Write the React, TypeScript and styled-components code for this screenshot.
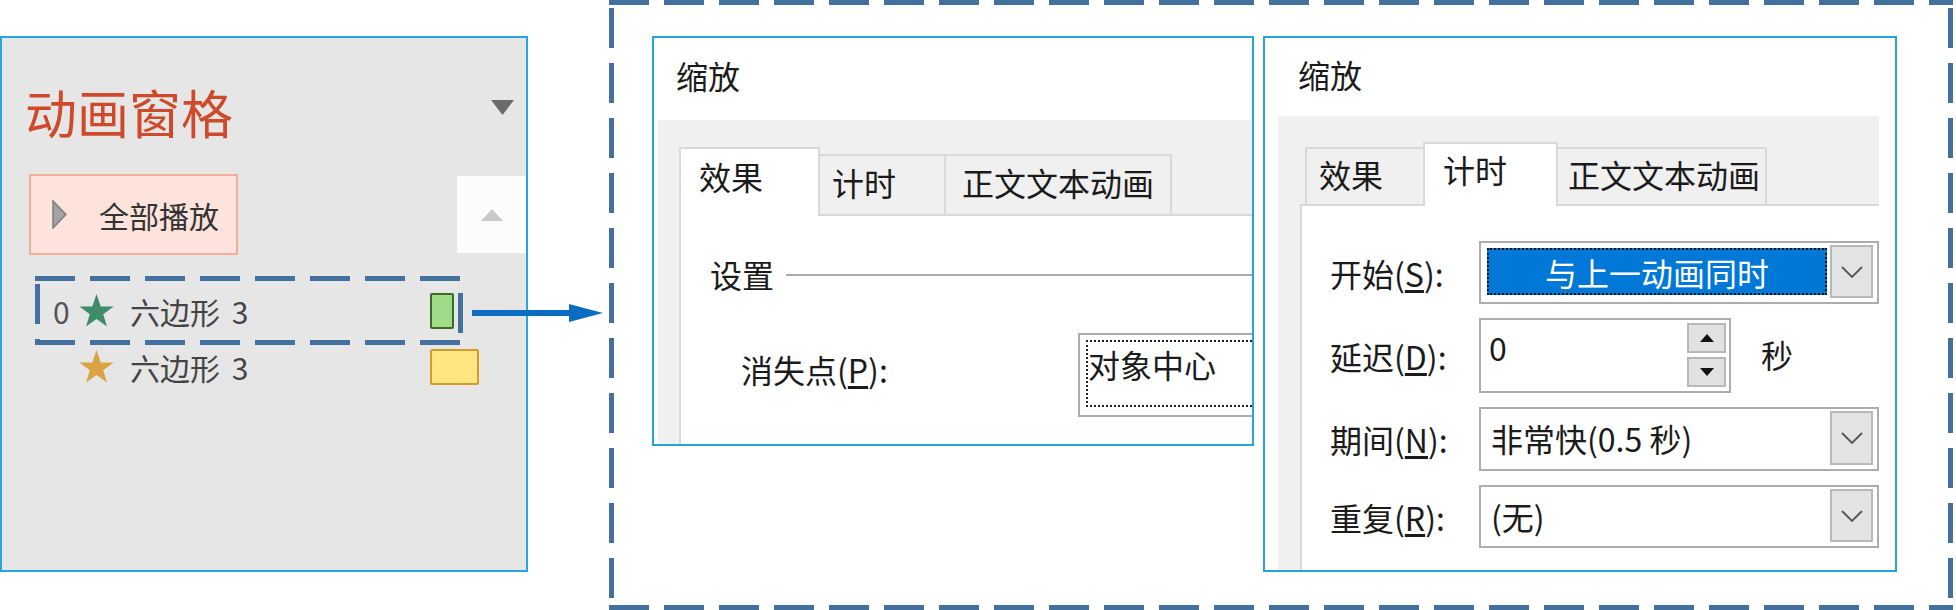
import React from 'react'
import styled, { createGlobalStyle } from 'styled-components'

const GlobalStyle = createGlobalStyle`
  html, body {
    margin: 0;
    padding: 0;
    background: #fff;
  }
  body {
    font-family: "Noto Sans CJK SC", "Noto Sans", sans-serif;
    color: #1b1b1b;
  }
  * { box-sizing: border-box; }
`

const DASH = '#43709d'

// dashed annotation frame, drawn with gradients so dash/gap match the picture (40 / 15)
const dashes = (t: number, left: number, right: number) => `
  background:
    repeating-linear-gradient(90deg, ${DASH} 0 40px, transparent 40px 55px) left top / 100% ${t}px no-repeat,
    repeating-linear-gradient(90deg, ${DASH} 0 40px, transparent 40px 55px) left bottom / 100% ${t}px no-repeat,
    repeating-linear-gradient(180deg, transparent 0 ${left}px, ${DASH} ${left}px ${left + 40}px, transparent ${left + 40}px 55px) left top / ${t}px 100% no-repeat,
    repeating-linear-gradient(180deg, transparent 0 ${right}px, ${DASH} ${right}px ${right + 40}px, transparent ${right + 40}px 55px) right top / ${t}px 100% no-repeat;
`

const Page = styled.div`
  position: relative;
  width: 1956px;
  height: 610px;
  display: flex;
  align-items: flex-start;
  overflow: hidden;
`

/* ---------- animation pane ---------- */

const AnimPane = styled.div`
  width: 528px;
  height: 536px;
  margin-top: 36px;
  border: 2px solid #25a6de;
  background: #e6e6e6;
  display: flex;
  flex-direction: column;
  flex-shrink: 0;
`

const PaneHeader = styled.div`
  display: flex;
  justify-content: space-between;
  align-items: flex-start;
  padding: 44px 12px 0 23px;
`

const PaneTitle = styled.div`
  font-size: 52px;
  line-height: 60px;
  color: #cf4a2b;
`

const HeaderCaret = styled.svg`
  margin-top: 18px;
`

const PlayRow = styled.div`
  display: flex;
  justify-content: space-between;
  align-items: flex-start;
  margin-top: 32px;
`

const PlayButton = styled.div`
  margin-left: 27px;
  width: 209px;
  height: 81px;
  border: 2px solid #f3ae98;
  background: #fde3db;
  display: flex;
  align-items: center;
  padding-left: 21px;
  gap: 32px;
`

const PlayLabel = styled.span`
  font-size: 30px;
  line-height: 40px;
  color: #333;
`

const ScrollUp = styled.div`
  width: 69px;
  height: 77px;
  margin-top: 2px;
  background: #fcfcfc;
  display: flex;
  align-items: center;
  justify-content: center;
`

const TrackList = styled.div`
  margin-top: 28px;
`

const TrackRow = styled.div`
  position: relative;
  height: 56px;
  display: flex;
  align-items: center;
  padding: 0 47px 0 51px;
`

const TrackIndex = styled.span`
  width: 25px;
  font-size: 30px;
  line-height: 40px;
  color: #555;
`

const TrackName = styled.span`
  flex: 1;
  margin-left: 15px;
  font-size: 30px;
  line-height: 40px;
  word-spacing: 5px;
  color: #444;
`

const SwatchSlot = styled.div`
  width: 49px;
  display: flex;
`

const Swatch = styled.div<{ $w: number; $fill: string; $edge: string }>`
  width: ${p => p.$w}px;
  height: 36px;
  background: ${p => p.$fill};
  border: 2px solid ${p => p.$edge};
  border-radius: 2px;
`

const Highlight = styled.div`
  position: absolute;
  left: 33px;
  top: -7px;
  width: 428px;
  height: 69px;
  ${dashes(5, 8, 17)}
`

const Arrow = styled.svg`
  position: absolute;
  left: 472px;
  top: 303px;
`

/* ---------- dialogs ---------- */

const Frame = styled.div`
  margin-left: 81px;
  width: 1344px;
  height: 610px;
  padding: 36px 0 0 43px;
  display: flex;
  align-items: flex-start;
  gap: 9px;
  flex-shrink: 0;
  ${dashes(5, 8, 8)}
`

const Dialog = styled.div<{ $w: number; $h: number }>`
  width: ${p => p.$w}px;
  height: ${p => p.$h}px;
  border: 2px solid #27a3db;
  background: #fff;
  overflow: hidden;
  display: flex;
  flex-direction: column;
  flex-shrink: 0;
`

const DialogTitle = styled.div<{ $h: number; $pt: number; $pl: number }>`
  height: ${p => p.$h}px;
  flex-shrink: 0;
  padding: ${p => p.$pt}px 0 0 ${p => p.$pl}px;
  font-size: 32px;
  line-height: 40px;
`

const DialogBody = styled.div<{ $ml: number; $mr: number }>`
  flex: 1;
  min-width: 0;
  margin: 0 ${p => p.$mr}px 0 ${p => p.$ml}px;
  background: #f0f0f0;
  overflow: hidden;
  display: flex;
  flex-direction: column;
`

const TabStrip = styled.div<{ $mt: number; $pl: number }>`
  display: flex;
  align-items: flex-end;
  margin-top: ${p => p.$mt}px;
  padding-left: ${p => p.$pl}px;
  position: relative;
  z-index: 1;
`

const Tab = styled.div<{ $w: number; $h: number; $pt: number; $pl: number; $active?: boolean }>`
  position: relative;
  flex-shrink: 0;
  width: ${p => p.$w}px;
  height: ${p => p.$h}px;
  padding: ${p => p.$pt}px 0 0 ${p => p.$pl}px;
  border: 2px solid #d9d9d9;
  border-bottom: none;
  background: ${p => (p.$active ? '#fff' : '#f0f0f0')};
  margin-bottom: ${p => (p.$active ? -2 : 0)}px;
  z-index: ${p => (p.$active ? 2 : 1)};
  font-size: 32px;
  line-height: 40px;
  white-space: nowrap;
  & + & {
    margin-left: -2px;
  }
`

const TabPanel = styled.div<{ $ml: number }>`
  flex: 1;
  min-width: 0;
  margin-left: ${p => p.$ml}px;
  background: #fff;
  border-top: 2px solid #d9d9d9;
  border-left: 2px solid #d9d9d9;
`

const GroupHeader = styled.div`
  display: flex;
  align-items: center;
  padding: 38px 0 0 29px;
  font-size: 32px;
  line-height: 40px;
`

const GroupRule = styled.div`
  flex: 1;
  height: 2px;
  margin: 2px 0 0 12px;
  background: #a9a9a9;
`

const FieldRow = styled.div`
  display: flex;
  align-items: flex-start;
  margin-top: 39px;
  padding-left: 60px;
`

const FieldLabel = styled.div<{ $w: number; $pt?: number }>`
  width: ${p => p.$w}px;
  flex-shrink: 0;
  padding-top: ${p => p.$pt ?? 0}px;
  font-size: 32px;
  line-height: 40px;
  white-space: nowrap;
  u { text-underline-offset: 3px; }
`

const DropBox = styled.div`
  width: 320px;
  height: 84px;
  flex-shrink: 0;
  border: 2px solid #acacac;
  padding: 5px 0 8px 6px;
`

const FocusText = styled.div`
  height: 100%;
  border: 2px dotted #222;
  border-right: none;
  padding-top: 2px;
  font-size: 32px;
  line-height: 40px;
`

const TimingGrid = styled.div`
  display: flex;
  flex-direction: column;
  gap: 14px;
  padding: 35px 0 0 28px;
`

const TimingRow = styled.div`
  display: flex;
  align-items: center;
`

const Combo = styled.div<{ $h: number }>`
  width: 400px;
  height: ${p => p.$h}px;
  flex-shrink: 0;
  border: 2px solid #adadad;
  background: #fff;
  display: flex;
  align-items: stretch;
  padding: 2px 4px 4px 6px;
`

const ComboValue = styled.div`
  flex: 1;
  display: flex;
  align-items: center;
  padding-left: 4px;
  font-size: 32px;
  line-height: 40px;
  white-space: nowrap;
`

const Selection = styled.div`
  flex: 1;
  margin: 3px 3px 3px 0;
  background: #0078d7;
  outline: 2px dotted #111;
  outline-offset: -2px;
  color: #fff;
  display: flex;
  align-items: center;
  justify-content: center;
  font-size: 32px;
  line-height: 40px;
`

const ComboButton = styled.div`
  width: 43px;
  flex-shrink: 0;
  background: #e3e3e3;
  border: 2px solid #b8b8b8;
  display: flex;
  align-items: center;
  justify-content: center;
`

const Spin = styled.div`
  width: 252px;
  height: 75px;
  flex-shrink: 0;
  border: 2px solid #adadad;
  display: flex;
  justify-content: space-between;
  padding: 3px 3px 3px 8px;
`

const SpinValue = styled.div`
  padding-top: 4px;
  font-size: 32px;
  line-height: 40px;
`

const SpinButtons = styled.div`
  width: 39px;
  display: flex;
  flex-direction: column;
  gap: 4px;
`

const SpinButton = styled.div`
  height: 30px;
  background: #e1e1e1;
  border: 2px solid #b8b8b8;
  display: flex;
  align-items: center;
  justify-content: center;
`

const Unit = styled.span`
  margin: -4px 0 0 30px;
  font-size: 32px;
  line-height: 40px;
`

/* ---------- drawings ---------- */

const Star = ({ color }: { color: string }) => (
  <svg width="37" height="34" viewBox="0 0 100 95">
    <polygon
      fill={color}
      points="50,0 61.8,35.1 98.1,35.1 68.8,56.8 79.4,91 50,70 20.6,91 31.2,56.8 1.9,35.1 38.2,35.1"
    />
  </svg>
)

const Chevron = () => (
  <svg width="22" height="12" viewBox="0 0 22 12">
    <polyline points="1,1 11,11 21,1" fill="none" stroke="#555" strokeWidth="1.8" />
  </svg>
)

const SpinArrow = ({ up }: { up?: boolean }) => (
  <svg width="14" height="8" viewBox="0 0 14 8">
    <polygon fill="#111" points={up ? '0,8 7,0 14,8' : '0,0 14,0 7,8'} />
  </svg>
)

export default function App() {
  return (
    <Page>
      <GlobalStyle />

      <AnimPane>
        <PaneHeader>
          <PaneTitle>动画窗格</PaneTitle>
          <HeaderCaret width="23" height="15" viewBox="0 0 23 15">
            <polygon fill="#6b6b6b" points="0,0 23,0 11.5,15" />
          </HeaderCaret>
        </PaneHeader>

        <PlayRow>
          <PlayButton>
            <svg width="15" height="29" viewBox="0 0 15 29">
              <polygon fill="#a2a2a2" stroke="#7e7e7e" strokeWidth="1.5" points="1,1 14,14.5 1,28" />
            </svg>
            <PlayLabel>全部播放</PlayLabel>
          </PlayButton>
          <ScrollUp>
            <svg width="22" height="12" viewBox="0 0 22 12">
              <polygon fill="#c9c9c9" points="0,12 11,0 22,12" />
            </svg>
          </ScrollUp>
        </PlayRow>

        <TrackList>
          <TrackRow>
            <Highlight />
            <TrackIndex>0</TrackIndex>
            <Star color="#3f8c6b" />
            <TrackName>六边形 3</TrackName>
            <SwatchSlot>
              <Swatch $w={24} $fill="#a0dc88" $edge="#3a6b29" />
            </SwatchSlot>
          </TrackRow>
          <TrackRow>
            <TrackIndex />
            <Star color="#d9a444" />
            <TrackName>六边形 3</TrackName>
            <SwatchSlot>
              <Swatch $w={49} $fill="#ffe680" $edge="#d49b2c" />
            </SwatchSlot>
          </TrackRow>
        </TrackList>
      </AnimPane>

      <Arrow width="132" height="20" viewBox="0 0 132 20">
        <rect x="0" y="7" width="99" height="6" fill="#0a6dc2" />
        <polygon fill="#0a6dc2" points="97,1 131,10 97,19" />
      </Arrow>

      <Frame>
        <Dialog $w={602} $h={410}>
          <DialogTitle $h={82} $pt={17} $pl={22}>缩放</DialogTitle>
          <DialogBody $ml={4} $mr={0}>
            <TabStrip $mt={27} $pl={21}>
              <Tab $w={141} $h={69} $pt={7} $pl={18} $active>效果</Tab>
              <Tab $w={128} $h={60} $pt={6} $pl={12}>计时</Tab>
              <Tab $w={228} $h={60} $pt={6} $pl={16}>正文文本动画</Tab>
            </TabStrip>
            <TabPanel $ml={21}>
              <GroupHeader>
                设置
                <GroupRule />
              </GroupHeader>
              <FieldRow>
                <FieldLabel $w={337} $pt={16}>
                  消失点(<u>P</u>):
                </FieldLabel>
                <DropBox>
                  <FocusText>对象中心</FocusText>
                </DropBox>
              </FieldRow>
            </TabPanel>
          </DialogBody>
        </Dialog>

        <Dialog $w={634} $h={536}>
          <DialogTitle $h={78} $pt={16} $pl={33}>缩放</DialogTitle>
          <DialogBody $ml={13} $mr={16}>
            <TabStrip $mt={26} $pl={27}>
              <Tab $w={120} $h={57} $pt={5} $pl={12}>效果</Tab>
              <Tab $w={135} $h={64} $pt={5} $pl={18} $active>计时</Tab>
              <Tab $w={211} $h={57} $pt={5} $pl={10}>正文文本动画</Tab>
            </TabStrip>
            <TabPanel $ml={22}>
              <TimingGrid>
                <TimingRow>
                  <FieldLabel $w={149}>开始(<u>S</u>):</FieldLabel>
                  <Combo $h={63}>
                    <Selection>与上一动画同时</Selection>
                    <ComboButton><Chevron /></ComboButton>
                  </Combo>
                </TimingRow>
                <TimingRow>
                  <FieldLabel $w={149}>延迟(<u>D</u>):</FieldLabel>
                  <Spin>
                    <SpinValue>0</SpinValue>
                    <SpinButtons>
                      <SpinButton><SpinArrow up /></SpinButton>
                      <SpinButton><SpinArrow /></SpinButton>
                    </SpinButtons>
                  </Spin>
                  <Unit>秒</Unit>
                </TimingRow>
                <TimingRow>
                  <FieldLabel $w={149}>期间(<u>N</u>):</FieldLabel>
                  <Combo $h={64}>
                    <ComboValue>非常快(0.5 秒)</ComboValue>
                    <ComboButton><Chevron /></ComboButton>
                  </Combo>
                </TimingRow>
                <TimingRow>
                  <FieldLabel $w={149}>重复(<u>R</u>):</FieldLabel>
                  <Combo $h={63}>
                    <ComboValue>(无)</ComboValue>
                    <ComboButton><Chevron /></ComboButton>
                  </Combo>
                </TimingRow>
              </TimingGrid>
            </TabPanel>
          </DialogBody>
        </Dialog>
      </Frame>
    </Page>
  )
}
